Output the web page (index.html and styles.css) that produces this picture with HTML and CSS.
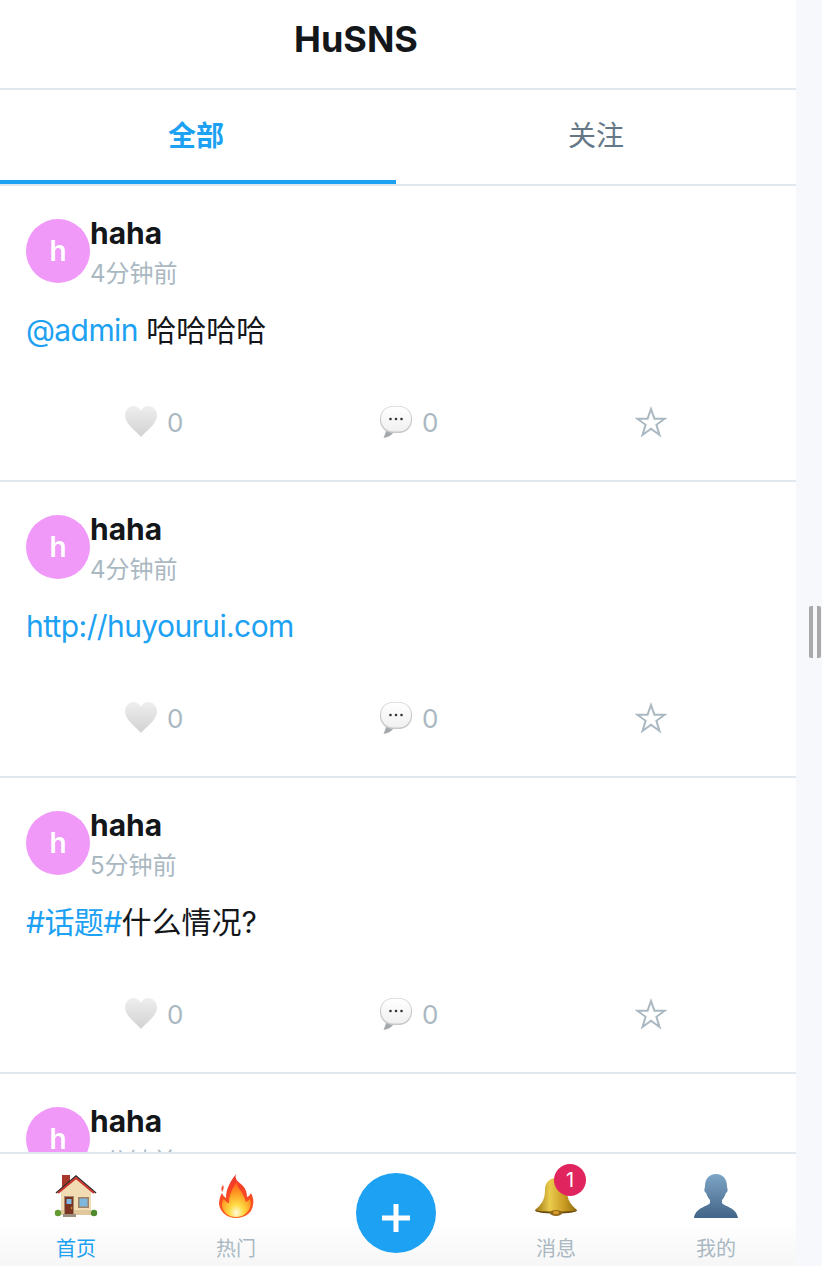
FILE: index.html
```html
<!DOCTYPE html>
<html lang="zh-CN">
<head>
  <meta charset="UTF-8">
  <title>HuSNS</title>
  <meta name="viewport" content="width=device-width, initial-scale=1">
  <link rel="stylesheet" href="styles.css">
</head>
<body>
  <svg class="defs" width="0" height="0" aria-hidden="true">
    <defs>
      <linearGradient id="heartFill" x1="0" y1="0" x2="0" y2="1">
        <stop offset="0" stop-color="#eeeeee"/>
        <stop offset="1" stop-color="#d2d2d2"/>
      </linearGradient>
      <linearGradient id="bubbleFill" x1="0" y1="0" x2="0" y2="1">
        <stop offset="0" stop-color="#ffffff"/>
        <stop offset="1" stop-color="#f0f0f0"/>
      </linearGradient>
      <linearGradient id="flameOuter" x1="0" y1="0" x2="0" y2="1">
        <stop offset="0" stop-color="#f0352a"/>
        <stop offset="1" stop-color="#ff5f1f"/>
      </linearGradient>
      <radialGradient id="flameInner" cx="0.5" cy="0.88" r="0.8">
        <stop offset="0" stop-color="#fffbe0"/>
        <stop offset="0.3" stop-color="#ffdc45"/>
        <stop offset="0.7" stop-color="#ff9a22"/>
        <stop offset="1" stop-color="#ff6a1e"/>
      </radialGradient>
      <linearGradient id="bellFill" x1="0" y1="0" x2="1" y2="0">
        <stop offset="0" stop-color="#9c7210"/>
        <stop offset="0.35" stop-color="#eacb4c"/>
        <stop offset="0.7" stop-color="#c99b22"/>
        <stop offset="1" stop-color="#8f6a12"/>
      </linearGradient>
      <linearGradient id="userFill" x1="0" y1="0" x2="0" y2="1">
        <stop offset="0" stop-color="#7ea5c6"/>
        <stop offset="1" stop-color="#426487"/>
      </linearGradient>
      <symbol id="heart" viewBox="0 0 32 32">
        <path fill="url(#heartFill)" d="M16 31C11 25 0 18 0 9.500 0 4 4 0 8.500 0 12 0 15 2 16 5 17 2 20 0 23.500 0 28 0 32 4 32 9.500 32 18 21 25 16 31Z"/>
      </symbol>
      <symbol id="bubble" viewBox="0 0 32 32">
        <path fill="#a4a8ab" d="M7 23 3.500 32C7.500 31.500 11.500 29.500 14 26Z"/>
        <rect x="0" y="0" width="32" height="27" rx="13" fill="#c4c8cb"/>
        <rect x="1" y="0.500" width="30" height="25" rx="12" fill="url(#bubbleFill)"/>
        <circle cx="10.500" cy="13" r="1.300" fill="#30353a"/>
        <circle cx="16" cy="13" r="1.300" fill="#30353a"/>
        <circle cx="21.500" cy="13" r="1.300" fill="#30353a"/>
      </symbol>
      <symbol id="star" viewBox="0 0 32 32">
        <path fill="none" stroke="#aab8c2" stroke-width="2" d="M16 3 19.400 12.700H29.800L21.400 18.800 24.500 29 16 22.800 7.500 29 10.600 18.800 2.200 12.700H12.600Z"/>
      </symbol>
    </defs>
  </svg>

  <div class="app">
    <header class="top-title">HuSNS</header>
    <nav class="tabs">
      <a class="tab tab-active">全部</a>
      <a class="tab">关注</a>
    </nav>

    <main class="feed">
      <article class="post">
        <div class="post-head">
          <div class="avatar">h</div>
          <div class="post-meta">
            <div class="post-name">haha</div>
            <div class="post-time">4分钟前</div>
          </div>
        </div>
        <p class="post-body"><a class="link">@admin</a> 哈哈哈哈</p>
        <div class="post-actions">
          <div class="action"><svg class="action-icon"><use href="#heart"/></svg><span>0</span></div>
          <div class="action"><svg class="action-icon"><use href="#bubble"/></svg><span>0</span></div>
          <div class="action"><svg class="action-icon"><use href="#star"/></svg></div>
        </div>
      </article>

      <article class="post">
        <div class="post-head">
          <div class="avatar">h</div>
          <div class="post-meta">
            <div class="post-name">haha</div>
            <div class="post-time">4分钟前</div>
          </div>
        </div>
        <p class="post-body"><a class="link">http://huyourui.com</a></p>
        <div class="post-actions">
          <div class="action"><svg class="action-icon"><use href="#heart"/></svg><span>0</span></div>
          <div class="action"><svg class="action-icon"><use href="#bubble"/></svg><span>0</span></div>
          <div class="action"><svg class="action-icon"><use href="#star"/></svg></div>
        </div>
      </article>

      <article class="post">
        <div class="post-head">
          <div class="avatar">h</div>
          <div class="post-meta">
            <div class="post-name">haha</div>
            <div class="post-time">5分钟前</div>
          </div>
        </div>
        <p class="post-body"><a class="link">#话题#</a>什么情况?</p>
        <div class="post-actions">
          <div class="action"><svg class="action-icon"><use href="#heart"/></svg><span>0</span></div>
          <div class="action"><svg class="action-icon"><use href="#bubble"/></svg><span>0</span></div>
          <div class="action"><svg class="action-icon"><use href="#star"/></svg></div>
        </div>
      </article>

      <article class="post">
        <div class="post-head">
          <div class="avatar">h</div>
          <div class="post-meta">
            <div class="post-name">haha</div>
            <div class="post-time">5分钟前</div>
          </div>
        </div>
      </article>
    </main>

    <footer class="bottom-nav">
      <a class="nav-item nav-active">
        <svg class="nav-icon" viewBox="0 0 44 44">
          <path fill="#a8382c" d="M8 1h8v14H8z"/>
          <path fill="#f1dcb4" d="M7 17 22 4l15 13v24H7z"/>
          <path fill="#e0c89c" d="M7 36h30v5H7z"/>
          <path fill="none" stroke="#2f2a2a" stroke-width="1.500" d="M2 19 22 2l20 17"/>
          <path fill="none" stroke="#c9352c" stroke-width="2" d="M4 19 22 4l18 15"/>
          <path fill="#9d8f80" d="M9 40h13v3H9z"/>
          <path fill="#a78a6e" d="M10 22h10v18H10z"/>
          <path fill="#7c3422" d="M11 23h8v17h-8z"/>
          <path fill="#7fb8e0" d="M12.500 25h5v5h-5z"/>
          <circle cx="17.500" cy="34" r=".8" fill="#e8b23a"/>
          <path fill="#9d8264" d="M24 23h11v11H24z"/>
          <path fill="#7fb6de" d="M25.500 24.500h8v8h-8z"/>
          <circle cx="4" cy="39" r="3.200" fill="#63992f"/>
          <circle cx="40" cy="39" r="3.200" fill="#4f8a2c"/>
        </svg>
        <span>首页</span>
      </a>
      <a class="nav-item">
        <svg class="nav-icon" viewBox="0 0 44 44">
          <path fill="#f4513a" d="M9 11C10 13 10 15 8 18 7 15 7 13 9 11Z"/>
          <path fill="url(#flameOuter)" d="M22 0C20 6 25 8 29 12 32 15 33 19 33 23 35 22 36 21 37 19 39 23 40 27 39 31 38 39 31 44 22 44 13 44 6 38 5 30 5 26 6 22 8 19 9 21 10 23 12 24 12 15 16 8 22 0Z"/>
          <path fill="url(#flameInner)" d="M23 8C23 13 26 15 28 19 30 22 31 26 32 28 34 27 35 26 36 25 37 28 37 31 36 33 34 39 29 43 22 43 14 43 9 38 8 32 8 29 8 27 10 25 11 27 13 29 15 29 15 21 18 15 23 8Z"/>
        </svg>
        <span>热门</span>
      </a>
      <div class="nav-item nav-add">
        <button class="add-btn" type="button">
          <svg class="add-plus" viewBox="0 0 28 28"><path fill="#fff" d="M11.500 0h5v11.500H28v5H16.500V28h-5V16.500H0v-5h11.500z"/></svg>
        </button>
      </div>
      <a class="nav-item">
        <div class="nav-icon-wrap">
          <svg class="nav-icon" viewBox="0 0 44 44">
            <path fill="url(#bellFill)" d="M22 4C15 4 11 9 11 16 11 26 7 31 1 36 1 38 8 39 22 39 36 39 43 38 43 36 37 31 33 26 33 16 33 9 29 4 22 4Z"/>
            <path fill="#6d4e10" d="M1 36C5 38 39 38 43 36 43 38 36 39.500 22 39.500 8 39.500 1 38 1 36Z"/>
            <ellipse cx="22" cy="39" rx="6" ry="3" fill="#8e661a"/>
            <ellipse cx="22" cy="38.500" rx="3" ry="1.800" fill="#d99a2a"/>
          </svg>
          <span class="badge">1</span>
        </div>
        <span>消息</span>
      </a>
      <a class="nav-item">
        <svg class="nav-icon" viewBox="0 0 44 44">
          <path fill="url(#userFill)" d="M22 0C29 0 33 5 33 12 33 14 34 15 33.500 17 33 18.500 32 18.500 31.500 20 30.500 23 29 25 28 26V29C31 33 42 33 44 44H0C2 33 13 33 16 29V26C15 25 13.500 23 12.500 20 12 18.500 11 18.500 10.500 17 10 15 11 14 11 12 11 5 15 0 22 0Z"/>
        </svg>
        <span>我的</span>
      </a>
    </footer>
  </div>

  <aside class="side-strip">
    <div class="grip"></div>
  </aside>
</body>
</html>
```
FILE: styles.css
```css
/* page */
html, body {
  height: 100%;
}
body {
  margin: 0;
  display: flex;
  height: 1266px;
  overflow: hidden;
  background: #f7f8fc;
  font-family: Inter, "Noto Sans CJK SC", sans-serif;
  color: #14171a;
}
.defs {
  position: absolute;
}
.app {
  width: 796px;
  height: 1266px;
  display: flex;
  flex-direction: column;
  background: #fff;
  overflow: hidden;
  position: relative;
}
.side-strip {
  width: 26px;
  display: flex;
  align-items: center;
  padding-left: 13px;
  padding-bottom: 2px;
  box-sizing: border-box;
}
.grip {
  width: 4px;
  height: 52px;
  border-left: 4px solid #a9a9a9;
  border-right: 4px solid #a9a9a9;
  border-radius: 2px;
}

/* header + tabs */
.top-title {
  flex: none;
  height: 88px;
  border-bottom: 2px solid #e1e8ed;
  line-height: 78px;
  padding-right: 84px;
  text-align: center;
  font-size: 36px;
  font-weight: 650;
  color: #14171a;
}
.tabs {
  flex: none;
  display: flex;
  height: 94px;
  border-bottom: 2px solid #e1e8ed;
}
.tab {
  flex: 1;
  text-align: center;
  line-height: 92px;
  font-size: 28px;
  color: #657786;
}
.tab-active {
  flex: none;
  width: 392px;
  padding-right: 4px;
  height: 90px;
  color: #1da1f2;
  font-weight: 700;
  border-bottom: 4px solid #1da1f2;
}

/* feed */
.feed {
  flex: 1;
  overflow: hidden;
}
.post {
  height: 262px;
  border-bottom: 2px solid #e1e8ed;
  padding: 32px 26px 0;
}
.post-head {
  display: flex;
}
.avatar {
  width: 64px;
  height: 64px;
  margin-top: 1px;
  border-radius: 50%;
  background: #f199f9;
  color: #fff;
  font-size: 28px;
  font-weight: 600;
  line-height: 64px;
  text-align: center;
}
.post-meta {
  display: flex;
  flex-direction: column;
}
.post-name {
  font-size: 30px;
  font-weight: 650;
  line-height: 30px;
}
.post-time {
  font-size: 24px;
  line-height: 30px;
  margin-top: 11px;
  color: #aab8c2;
}
.post-body {
  margin: 23px 0 0;
  font-size: 30px;
  line-height: 36px;
  height: 36px;
  color: #14171a;
}
.link {
  color: #1da1f2;
  letter-spacing: -0.6px;
}
.post-actions {
  display: flex;
  margin: 56px 0 0 99px;
}
.action {
  flex: none;
  width: 255px;
  display: flex;
  align-items: center;
  gap: 10px;
  height: 36px;
  color: #aab8c2;
  font-size: 26px;
}
.action:last-child {
  width: auto;
}
.action-icon {
  width: 32px;
  height: 32px;
}

/* bottom bar */
.bottom-nav {
  position: absolute;
  left: 0;
  right: 0;
  bottom: 0;
  height: 112px;
  display: flex;
  border-top: 2px solid #e1e8ed;
  background: linear-gradient(#fff 60%, #f6f6f6);
}
.nav-item {
  flex: none;
  width: 160px;
  display: flex;
  flex-direction: column;
  align-items: center;
  padding-top: 20px;
  box-sizing: border-box;
  font-size: 20px;
  line-height: 24px;
  color: #aab8c2;
}
.nav-item:first-child {
  margin-left: -4px;
}
.nav-item > span {
  margin-top: 19px;
}
.nav-active {
  color: #1da1f2;
}
.nav-icon {
  display: block;
  width: 44px;
  height: 44px;
}
.nav-icon-wrap {
  position: relative;
}
.nav-add {
  padding-top: 19px;
}
.add-btn {
  width: 80px;
  height: 80px;
  padding: 10px 0 0;
  border: none;
  border-radius: 50%;
  background: #1da1f2;
  display: flex;
  align-items: center;
  justify-content: center;
}
.add-plus {
  width: 28px;
  height: 28px;
}
.badge {
  position: absolute;
  left: 20px;
  top: -10px;
  width: 32px;
  height: 32px;
  border-radius: 50%;
  background: #e0245e;
  color: #fff;
  font-size: 20px;
  line-height: 32px;
  text-align: center;
}
```
